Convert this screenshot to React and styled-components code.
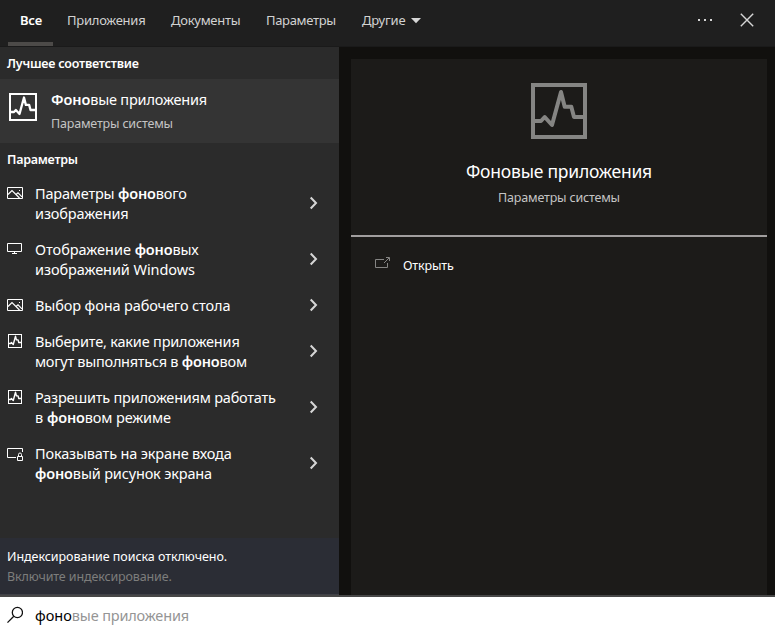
import React from 'react';
import styled, { createGlobalStyle } from 'styled-components';

const GlobalStyle = createGlobalStyle`
  * { box-sizing: border-box; }
  body {
    margin: 0;
    background: #fff;
    color: #fff;
    font-family: "Noto Sans", "Open Sans", sans-serif;
    overflow: hidden;
  }
`;

const Window = styled.div`
  width: 775px;
  height: 631px;
  display: flex;
  flex-direction: column;
`;

const Header = styled.header`
  height: 47px;
  flex: none;
  display: flex;
  justify-content: space-between;
  background: #1f1f1f;
  border-bottom: 1px solid #1a1a1a;
  padding: 0 20px 0 8px;
`;

const Tabs = styled.nav`
  display: flex;
`;

const Tab = styled.div`
  height: 46px;
  width: ${(p) => p.$width}px;
  padding: 0 0 0 ${(p) => p.$inset ?? 0}px;
  margin-right: ${(p) => p.$gap ?? 0}px;
  display: flex;
  align-items: flex-start;
  font-size: 13px;
  line-height: 41px;
  font-weight: ${(p) => (p.$active ? 600 : 400)};
  color: ${(p) => (p.$active ? '#fff' : '#d2d2d2')};
  letter-spacing: ${(p) => p.$track ?? 0}px;
  white-space: nowrap;
  border-bottom: 4px solid ${(p) => (p.$active ? '#4c4a48' : 'transparent')};
`;

const Caret = styled.svg`
  margin: 18px 0 0 6px;
`;

const Actions = styled.div`
  display: flex;
  align-items: center;
  gap: 25px;
  height: 40px;
`;

const Body = styled.div`
  height: 548px;
  flex: none;
  display: flex;
  background: #11100e;
`;

const Results = styled.aside`
  width: 339px;
  flex: none;
  display: flex;
  flex-direction: column;
  background: #2b2b2b;
`;

const GroupTitle = styled.div`
  height: ${(p) => p.$height}px;
  padding-left: 7px;
  font-size: 12.5px;
  line-height: 33px;
  font-weight: 600;
  letter-spacing: ${(p) => p.$track}px;
`;

const BestMatch = styled.div`
  height: 64px;
  display: flex;
  padding: 14px 0 0 9px;
  gap: 14px;
  background: #343434;
`;

const BestText = styled.div`
  display: flex;
  flex-direction: column;
  margin-top: -4px;
`;

const Caption = styled.div`
  font-size: 12.5px;
  line-height: 20px;
  letter-spacing: -0.18px;
  color: #c4c4c4;
`;

const Line = styled.div`
  font-size: 14.5px;
  line-height: 20px;
  white-space: pre;
`;

const BestLine = styled(Line)`
  margin-bottom: 5px;
`;

const Run = styled.span`
  font-weight: ${(p) => (p.$bold ? 600 : 400)};
  letter-spacing: ${(p) => p.$track ?? 0}px;
`;

const Item = styled.div`
  display: flex;
  align-items: center;
  padding: 7px 21px 9px 7px;
`;

const ItemIcon = styled.div`
  width: 16px;
  height: 16px;
  margin: 2px 12px 0 0;
  align-self: flex-start;
  display: flex;
`;

const ItemText = styled.div`
  flex: 1;
`;

const ChevronIcon = styled.svg`
  flex: none;
`;

const IndexNotice = styled.div`
  margin-top: auto;
  height: 57px;
  padding: 9px 0 0 7px;
  background: #2b2d35;
  border-bottom: 1px solid #3f4046;
`;

const NoticeLine = styled.div`
  font-size: 12.5px;
  line-height: 20px;
  letter-spacing: ${(p) => p.$track}px;
  color: ${(p) => (p.$muted ? '#7d7d7c' : '#fff')};
`;

const Preview = styled.main`
  width: 416px;
  margin: 12px 0 0 12px;
  display: flex;
  flex-direction: column;
  background: #1c1b19;
`;

const PreviewHero = styled.div`
  height: 178px;
  padding-top: 24px;
  display: flex;
  flex-direction: column;
  align-items: center;
  border-bottom: 2px solid #a19e9e;
`;

const PreviewTitle = styled.div`
  margin-top: 20px;
  font-size: 17.5px;
  line-height: 24px;
  letter-spacing: -0.22px;
`;

const PreviewCaption = styled(Caption)`
  margin-top: 5px;
`;

const OpenAction = styled.div`
  display: flex;
  padding: 18px 0 0 24px;
  gap: 12px;
  font-size: 12.5px;
  line-height: 21px;
  letter-spacing: -0.15px;
`;

const OpenIcon = styled.svg`
  margin-top: 2px;
`;

const SearchBar = styled.div`
  flex: 1;
  display: flex;
  gap: 12px;
  padding: 8px 0 0 7px;
  border-top: 2px solid #474747;
  background: #fff;
  color: #000;
`;

const SearchIcon = styled.svg`
  margin-top: 1px;
`;

const Completion = styled.span`
  color: #959595;
  letter-spacing: -0.16px;
`;

function ActivityIcon({ size, color = '#fff', traceWidth = 4 }) {
  return (
    <svg width={size} height={size} viewBox="0 0 56 56" fill="none" stroke={color} strokeWidth="4">
      <path d="M2 2H54V54H2Z" shapeRendering="crispEdges" />
      <path
        d="M4 38H10L13.7 34L21 42L30 9L33.7 23.7H40.3L43 34H52"
        strokeLinejoin="round"
        strokeWidth={traceWidth}
      />
    </svg>
  );
}

const SmallActivity = styled.div`
  padding: 1px;
  display: flex;
`;

function PictureIcon() {
  return (
    <svg width="16" height="16" fill="none" stroke="#fff">
      <path d="M.5 2.5H15.5V13.5H.5Z" />
      <path d="M1 9.5L5 5.5L12.5 13M9 9.5L11 7.8L15 11.8" strokeWidth="1.2" />
      <path d="M12 5H13V6H12Z" fill="#fff" stroke="none" />
    </svg>
  );
}

function MonitorIcon() {
  return (
    <svg width="16" height="16" fill="none" stroke="#fff">
      <path d="M.5 2.5H14.5V10.5H.5Z" />
      <path d="M7.5 11V12.5M5 12.5H10" />
    </svg>
  );
}

function LockScreenIcon() {
  return (
    <svg width="16" height="16" fill="none" stroke="#fff">
      <path d="M9 12.5H.5V3.5H15.5V7" />
      <path d="M10.5 11.5H15.5V15.5H10.5Z" />
      <path d="M11.5 11V9.5Q11.5 8 13 8T14.5 9.5V11" />
    </svg>
  );
}

const icons = {
  picture: <PictureIcon />,
  monitor: <MonitorIcon />,
  activity: (
    <SmallActivity>
      <ActivityIcon size={14} traceWidth={5.5} />
    </SmallActivity>
  ),
  lock: <LockScreenIcon />,
};

const match = { t: 'фоно', bold: true, track: -0.12 };

const settings = [
  {
    icon: 'picture',
    lines: [
      [{ t: 'Параметры ', track: -0.19 }, match, { t: 'вого', track: -0.2 }],
      [{ t: 'изображения', track: -0.12 }],
    ],
  },
  {
    icon: 'monitor',
    lines: [
      [{ t: 'Отображение ', track: -0.02 }, match, { t: 'вых', track: -0.2 }],
      [{ t: 'изображений Windows', track: -0.07 }],
    ],
  },
  { icon: 'picture', lines: [[{ t: 'Выбор фона рабочего стола', track: -0.12 }]] },
  {
    icon: 'activity',
    lines: [
      [{ t: 'Выберите, какие приложения', track: -0.19 }],
      [{ t: 'могут выполняться в ', track: -0.27 }, match, { t: 'вом', track: -0.2 }],
    ],
  },
  {
    icon: 'activity',
    lines: [
      [{ t: 'Разрешить приложениям работать', track: -0.22 }],
      [{ t: 'в ' }, match, { t: 'вом режиме', track: -0.14 }],
    ],
  },
  {
    icon: 'lock',
    lines: [
      [{ t: 'Показывать на экране входа', track: -0.16 }],
      [match, { t: 'вый рисунок экрана', track: -0.16 }],
    ],
  },
];

function Chevron() {
  return (
    <ChevronIcon width="9" height="14" fill="none" stroke="#d6d6d6" strokeWidth="2">
      <path d="M1.7 1.5L7 7L1.7 12.5" />
    </ChevronIcon>
  );
}

export default function App() {
  return (
    <>
      <GlobalStyle />
      <Window>
        <Header>
          <Tabs>
            <Tab $active $width={45} $inset={12} $gap={14} $track={-0.2}>Все</Tab>
            <Tab $width={104} $track={-0.25}>Приложения</Tab>
            <Tab $width={95} $track={-0.27}>Документы</Tab>
            <Tab $width={96} $track={-0.32}>Параметры</Tab>
            <Tab $width={60} $track={-0.2}>
              Другие
              <Caret width="10" height="6"><path d="M0 0H10L5 5.3Z" fill="#d6d6d6" /></Caret>
            </Tab>
          </Tabs>
          <Actions>
            <svg width="16" height="2" fill="#d6d6d6">
              <path d="M0 0h2v2H0zM6 0h2v2H6zM12 0h2v2h-2z" />
            </svg>
            <svg width="16" height="16" stroke="#d6d6d6" strokeWidth="1.4">
              <path d="M1.8 1.8L14.2 14.2M14.2 1.8L1.8 14.2" />
            </svg>
          </Actions>
        </Header>
        <Body>
          <Results>
            <GroupTitle $height={32} $track={-0.22}>Лучшее соответствие</GroupTitle>
            <BestMatch>
              <ActivityIcon size={28} traceWidth={4.6} />
              <BestText>
                <BestLine>
                  <Run $bold $track={-0.12}>Фоно</Run>
                  <Run $track={-0.18}>вые приложения</Run>
                </BestLine>
                <Caption>Параметры системы</Caption>
              </BestText>
            </BestMatch>
            <GroupTitle $height={33} $track={-0.25}>Параметры</GroupTitle>
            {settings.map((item, i) => (
              <Item key={i}>
                <ItemIcon>{icons[item.icon]}</ItemIcon>
                <ItemText>
                  {item.lines.map((line, j) => (
                    <Line key={j}>
                      {line.map((run, k) => (
                        <Run key={k} $bold={run.bold} $track={run.track}>{run.t}</Run>
                      ))}
                    </Line>
                  ))}
                </ItemText>
                <Chevron />
              </Item>
            ))}
            <IndexNotice>
              <NoticeLine $track={-0.05}>Индексирование поиска отключено.</NoticeLine>
              <NoticeLine $muted $track={-0.13}>Включите индексирование.</NoticeLine>
            </IndexNotice>
          </Results>
          <Preview>
            <PreviewHero>
              <ActivityIcon size={56} color="#858583" />
              <PreviewTitle>Фоновые приложения</PreviewTitle>
              <PreviewCaption>Параметры системы</PreviewCaption>
            </PreviewHero>
            <OpenAction>
              <OpenIcon width="16" height="12" fill="none" stroke="#858583">
                <path d="M9 2.5H.5V10.5H12.5V6" />
                <path d="M9 6L14 1M11 .5H14.5V4" />
              </OpenIcon>
              Открыть
            </OpenAction>
          </Preview>
        </Body>
        <SearchBar>
          <SearchIcon width="16" height="18" fill="none" stroke="#111" strokeWidth="1.3">
            <circle cx="10.4" cy="6.5" r="5.1" />
            <path d="M6.8 10.3L.5 16.6" />
          </SearchIcon>
          <Line>
            фоно<Completion>вые приложения</Completion>
          </Line>
        </SearchBar>
      </Window>
    </>
  );
}
